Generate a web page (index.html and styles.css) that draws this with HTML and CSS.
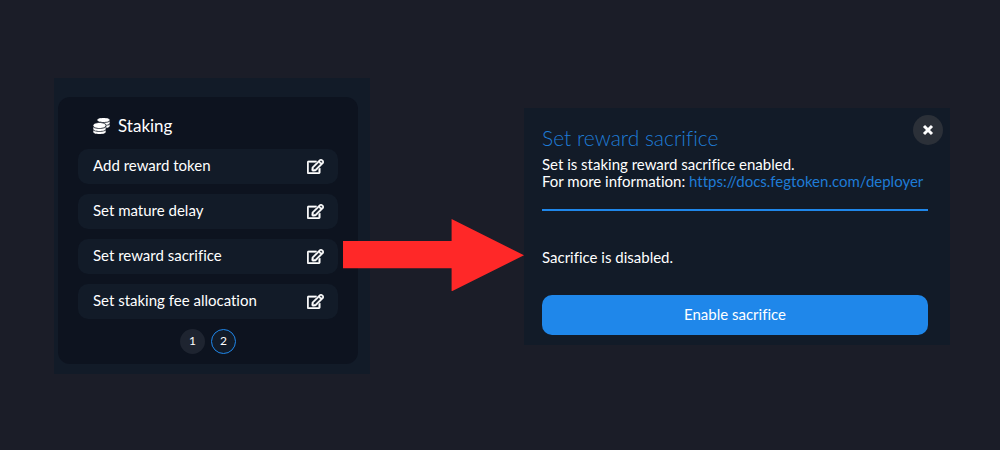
FILE: index.html
```html
<!DOCTYPE html>
<html lang="en">
<head>
<meta charset="utf-8">
<meta name="viewport" content="width=device-width, initial-scale=1">
<title>Set reward sacrifice</title>
<link rel="stylesheet" href="styles.css">
</head>
<body>
<svg class="sprite" aria-hidden="true">
  <symbol id="edit" viewBox="0 0 576 512"><path d="M402.3 344.9l32-32c5-5 13.7-1.5 13.7 5.7V464c0 26.5-21.5 48-48 48H48c-26.5 0-48-21.5-48-48V112c0-26.5 21.5-48 48-48h273.5c7.1 0 10.7 8.6 5.7 13.7l-32 32c-1.5 1.5-3.5 2.3-5.7 2.3H48v352h352V350.5c0-2.1.8-4.1 2.3-5.6zm156.6-201.8L296.3 405.7l-90.4 10c-26.2 2.9-48.5-19.2-45.6-45.6l10-90.4L432.9 17.1c22.9-22.9 59.9-22.9 82.7 0l43.2 43.2c22.9 22.9 22.9 60 .1 82.8zM460.1 174L402 115.9 216.2 301.8l-7.3 65.3 65.3-7.3L460.1 174zm64.8-79.7l-43.2-43.2c-4.1-4.1-10.8-4.1-14.8 0L436 82l58.1 58.1 30.9-30.9c4-4.2 4-10.8-.1-14.9z"/></symbol>
</svg>
<main class="page">
  <section class="panel panel-list">
    <div class="card">
      <h2 class="card-title">
        <svg class="coins" viewBox="0 0 512 512" aria-hidden="true"><path d="M0 405.3V448c0 35.3 86 64 192 64s192-28.7 192-64v-42.7C342.7 434.4 267.2 448 192 448S41.3 434.4 0 405.3zM320 128c106 0 192-28.7 192-64S426 0 320 0 128 28.7 128 64s86 64 192 64zM0 300.4V352c0 35.3 86 64 192 64s192-28.7 192-64v-51.6c-41.3 34-116.9 51.6-192 51.6S41.3 334.4 0 300.4zm416 11c57.3-11.1 96-31.7 96-55.4v-42.7c-23.2 16.4-57.3 27.6-96 34.5v63.6zM192 160C86 160 0 195.8 0 240s86 80 192 80 192-35.8 192-80-86-80-192-80zm219.3 56.3c60-10.8 100.7-32 100.7-56.3v-42.7c-35.5 25.1-96.5 38.6-160.7 41.8 29.5 14.3 51.2 33.5 60 57.2z"/></svg>
        Staking
      </h2>
      <div class="rows">
        <button class="row" type="button"><span>Add reward token</span><svg class="edit" aria-hidden="true"><use href="#edit"/></svg></button>
        <button class="row" type="button"><span>Set mature delay</span><svg class="edit" aria-hidden="true"><use href="#edit"/></svg></button>
        <button class="row" type="button"><span>Set reward sacrifice</span><svg class="edit" aria-hidden="true"><use href="#edit"/></svg></button>
        <button class="row" type="button"><span>Set staking fee allocation</span><svg class="edit" aria-hidden="true"><use href="#edit"/></svg></button>
      </div>
      <nav class="pager" aria-label="Pages">
        <button class="page-btn" type="button">1</button>
        <button class="page-btn current" type="button" aria-current="page">2</button>
      </nav>
    </div>
  </section>
  <svg class="arrow" viewBox="0 0 180 72" aria-hidden="true"><path d="M0 22H108V0L180 36L108 72V49H0z"/></svg>
  <section class="panel panel-dialog" role="dialog" aria-labelledby="dialog-title">
    <button class="close" type="button" aria-label="Close"><svg viewBox="0 0 12 12" aria-hidden="true"><path d="M2 2L10 10M10 2L2 10"/></svg></button>
    <h2 class="dialog-title" id="dialog-title">Set reward sacrifice</h2>
    <p class="text">Set is staking reward sacrifice enabled.<br>For more information: <a href="https://docs.fegtoken.com/deployer">https://docs.fegtoken.com/deployer</a></p>
    <hr class="rule">
    <p class="text">Sacrifice is disabled.</p>
    <button class="primary" type="button">Enable sacrifice</button>
  </section>
</main>
</body>
</html>
```
FILE: styles.css
```css
* {
  box-sizing: border-box;
}

body {
  margin: 0;
  background: #1b1d28;
  color: #fff;
  font-family: Lato, "Liberation Sans", sans-serif;
  font-size: 15px;
  line-height: 17px;
  font-variant-ligatures: none;
}

h2,
p {
  margin: 0;
  font-weight: 400;
}

button {
  border: 0;
  padding: 0;
  color: inherit;
  font: inherit;
  font-variant-ligatures: none;
  cursor: pointer;
}

.sprite {
  position: absolute;
  width: 0;
  height: 0;
}

.page {
  display: grid;
  grid-template-columns: 316fr 154fr 426fr;
  align-items: center;
  min-height: 100vh;
  padding: 2px 50px 0 54px;
}

.panel {
  background: #121b28;
}

.panel-list {
  padding: 19px 12px 10px 4px;
}

.card {
  padding: 20px 20px 10px;
  border-radius: 12px;
  background: #0d131f;
}

.card-title {
  display: flex;
  align-items: center;
  gap: 8px;
  padding-left: 15px;
  font-size: 17px;
  line-height: 18px;
}

.coins {
  width: 17px;
  height: 16px;
  fill: #fff;
  stroke: #fff;
  stroke-width: 12;
}

.rows {
  display: grid;
  gap: 10px;
  margin-top: 14px;
}

.row {
  display: flex;
  align-items: center;
  justify-content: space-between;
  height: 35px;
  padding: 0 14px 2px 15px;
  border-radius: 10px;
  background: #121b28;
  text-align: left;
}

.edit {
  width: 17px;
  height: 15px;
  margin-top: 1px;
  fill: #fff;
  stroke: #fff;
  stroke-width: 20;
}

.pager {
  display: flex;
  justify-content: center;
  gap: 6px;
  margin-top: 10px;
}

.page-btn {
  width: 25px;
  height: 25px;
  padding-bottom: 2px;
  border-radius: 50%;
  background: #1e2430;
  font-size: 12px;
}

.current {
  border: 1px solid #1f87ea;
  background: #121b28;
}

.arrow {
  z-index: 1;
  width: calc(100% + 27px);
  margin: 58px 0 0 -27px;
  fill: #ff2828;
}

.panel-dialog {
  position: relative;
  padding: 18px 22px 10px 18px;
}

.close {
  position: absolute;
  top: 7px;
  right: 7px;
  display: grid;
  place-items: center;
  width: 30px;
  height: 30px;
  border-radius: 50%;
  background: #2b3038;
}

.close svg {
  width: 12px;
  height: 12px;
  stroke: #fff;
  stroke-width: 3;
}

.dialog-title {
  margin-bottom: 6px;
  color: #1f7cd6;
  font-size: 21px;
  font-weight: 300;
  line-height: 24px;
}

.text a {
  color: #1f7cd6;
  text-decoration: none;
}

.rule {
  height: 2px;
  margin: 19px 0 38px;
  border: 0;
  background: #1f87ea;
}

.primary {
  width: 100%;
  height: 40px;
  margin-top: 29px;
  padding-bottom: 1px;
  border-radius: 10px;
  background: #1f87ea;
}
```
